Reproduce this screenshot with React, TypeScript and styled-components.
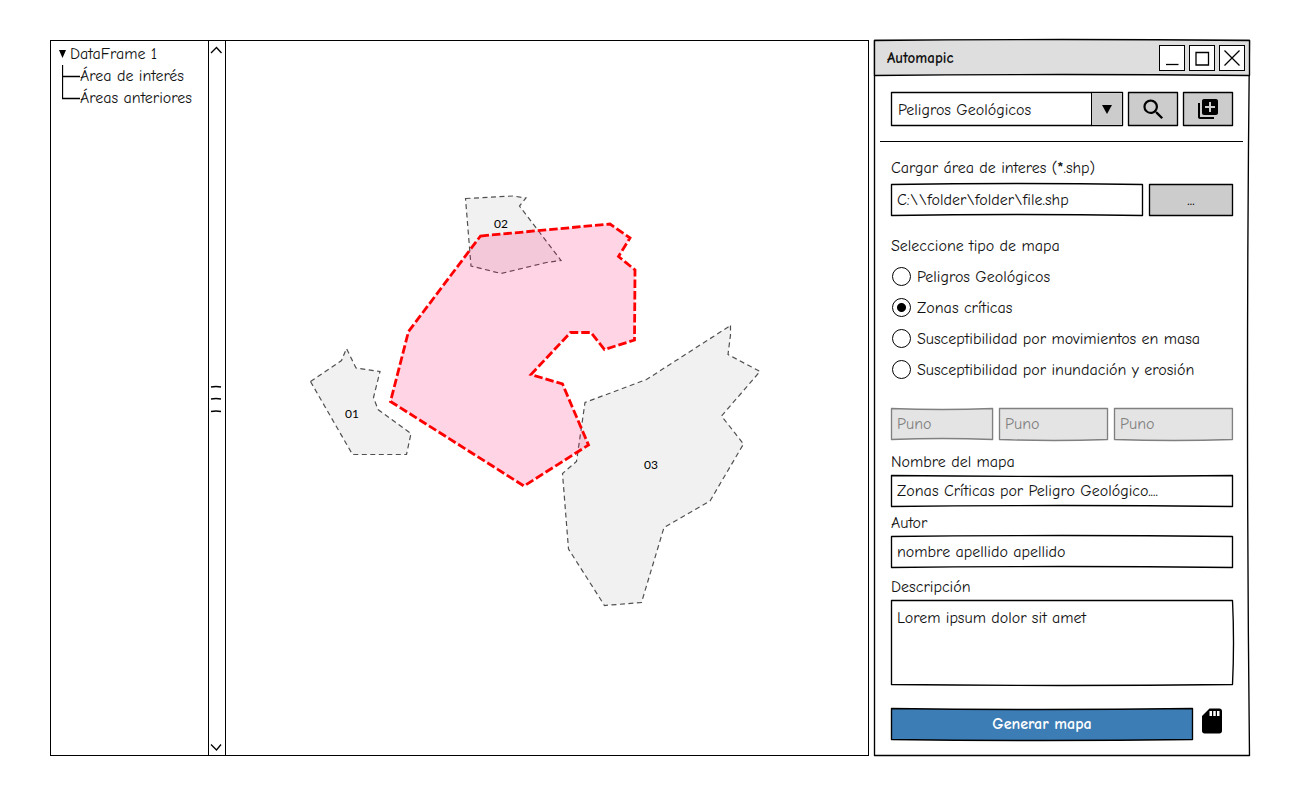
import React from "react";
import styled, { createGlobalStyle } from "styled-components";
import { MdLibraryAdd, MdSdCard, MdSearch } from "react-icons/md";

const GlobalStyle = createGlobalStyle`
  * { box-sizing: border-box; }
  body {
    margin: 0;
    background: #fff;
    color: #111;
    font: 16px/22px "Comic Neue", "Lato", sans-serif;
  }
  button, input, select, textarea { font: inherit; color: inherit; }
`;

/* ---------- hand-drawn outline ---------- */

const OutlineSvg = styled.svg`
  position: absolute;
  inset: 0;
  width: 100%;
  height: 100%;
  padding: 0;
  overflow: visible;
  pointer-events: none;
  z-index: -1;

  path { vector-effect: non-scaling-stroke; }
`;

type Bow = [number, number, number, number];

interface OutlineProps {
  w: number;
  h: number;
  fill?: string;
  stroke?: string;
  bow?: Bow;
}

/* A box whose sides bend by a pixel or so, given as top, right, bottom, left. */
function Outline({ w, h, fill = "#fff", stroke = "#000", bow = [0, 0, 0, 0] }: OutlineProps) {
  const [t, r, b, l] = bow.map((n) => n * 2);
  const x1 = w - 0.5;
  const y1 = h - 0.5;
  return (
    <OutlineSvg viewBox={`0 0 ${w} ${h}`} preserveAspectRatio="none" aria-hidden="true">
      <path
        d={`M.5 .5Q${w / 2} ${0.5 + t} ${x1} .5Q${x1 + r} ${h / 2} ${x1} ${y1}Q${w / 2} ${y1 + b} .5 ${y1}Q${0.5 + l} ${h / 2} .5 .5Z`}
        fill={fill}
        stroke={stroke}
        strokeWidth="1.35"
        strokeLinejoin="round"
      />
    </OutlineSvg>
  );
}

/* ---------- page ---------- */

const Page = styled.main`
  display: flex;
  gap: 5px;
  padding: 40px 60px 43px 50px;
`;

const MapWindow = styled.section`
  flex: 1;
  min-width: 0;
  display: flex;
  border: 1px solid #000;
`;

const Tree = styled.nav`
  width: 157px;
  padding: 2px 0 0 8px;
  flex: none;
`;

const TreeRoot = styled.div`
  display: flex;
  align-items: center;
  gap: 4px;
`;

const Branches = styled.ul`
  list-style: none;
  margin: 0;
  padding: 0 0 0 3px;
`;

const Branch = styled.li`
  display: flex;
  align-items: center;
  white-space: nowrap;
`;

const Scroller = styled.div`
  width: 18px;
  flex: none;
  display: flex;
  flex-direction: column;
  justify-content: space-between;
  align-items: center;
  padding: 5px 2px 4px 0;
  border: solid #000;
  border-width: 0 1px;
`;

const ScrollButton = styled.button`
  display: flex;
  padding: 0;
  border: 0;
  background: none;
`;

const MapCanvas = styled.svg`
  flex: 1;
  min-width: 0;
  display: block;
`;

/* ---------- dialog ---------- */

const Dialog = styled.section`
  position: relative;
  z-index: 0;
  width: 376px;
  flex: none;
`;

const TitleBar = styled.header`
  position: relative;
  z-index: 0;
  display: flex;
  align-items: center;
  gap: 4px;
  height: 36px;
  padding: 0 5px 1px 13px;
`;

const Title = styled.h1`
  flex: 1;
  margin: 0;
  font-size: 15px;
  line-height: 22px;
  font-weight: 900;
`;

const WindowButton = styled.button`
  display: flex;
  width: 26px;
  height: 26px;
  padding: 0;
  border: 1px solid #000;
  background: #fff;
`;

const Row = styled.div<{ $top?: number; $gap?: number }>`
  display: flex;
  gap: ${(p) => p.$gap ?? 6}px;
  margin-top: ${(p) => p.$top ?? 0}px;
`;

const Form = styled.form`
  padding: 16px 17px 15px;
`;

const Box = styled.div<{ $grow?: number; $width?: number; $height?: number; $muted?: boolean }>`
  position: relative;
  z-index: 0;
  display: flex;
  flex: ${(p) => (p.$width ? `0 0 ${p.$width}px` : `${p.$grow ?? 1} 1 0`)};
  min-width: 0;
  height: ${(p) => p.$height ?? 32}px;
  color: ${(p) => (p.$muted ? "#808080" : "inherit")};
`;

const TextInput = styled.input`
  width: 100%;
  padding: 0 6px;
  border: 0;
  background: none;
  outline-offset: -2px;
`;

const TextArea = styled.textarea`
  width: 100%;
  padding: 7px 6px;
  border: 0;
  background: none;
  resize: none;
`;

const Select = styled.select`
  width: 100%;
  padding: 2px 38px 0 7px;
  border: 0;
  background: none;
  appearance: none;
`;

const SelectArrow = styled.span`
  position: absolute;
  top: 1px;
  right: 1px;
  bottom: 1px;
  width: 31px;
  display: flex;
  align-items: center;
  justify-content: center;
  border-left: 1px solid #000;
  background: #ccc;
  pointer-events: none;
`;

const PlainButton = styled.button<{ $primary?: boolean }>`
  display: flex;
  align-items: center;
  justify-content: center;
  width: 100%;
  padding: 0;
  border: 0;
  background: none;
  color: ${(p) => (p.$primary ? "#fff" : "#000")};
  font-weight: ${(p) => (p.$primary ? 700 : 400)};
`;

const Rule = styled.hr`
  height: 1px;
  margin: 15px -10px 0 -11px;
  border: 0;
  background: #000;
`;

const Label = styled.label<{ $top: number; $bottom?: number }>`
  display: block;
  margin: ${(p) => p.$top}px 0 ${(p) => p.$bottom ?? 2}px;
`;

const RadioRow = styled.label`
  display: flex;
  align-items: center;
  gap: 6px;
  height: 31px;
  white-space: nowrap;
`;

const Radio = styled.input.attrs({ type: "radio" })`
  appearance: none;
  flex: none;
  width: 19px;
  height: 19px;
  margin: 0 0 0 1px;
  border: 1px solid #000;
  border-radius: 50%;

  &:checked {
    background: radial-gradient(circle, #000 4px, transparent 5px);
  }
`;

const CardButton = styled.button`
  display: flex;
  flex: none;
  width: 36px;
  height: 30px;
  margin: -2px 0 0 -2px;
  padding: 0;
  border: 0;
  background: none;
  color: #000;
`;

const areas = [
  {
    id: "01",
    x: 352,
    y: 418,
    points:
      "310.5,381.5 341.5,360.5 346.5,348.5 356,368 380,371.5 373.5,397.5 378,409.5 411,433.5 406.5,454.5 352.5,454.5",
  },
  {
    id: "02",
    x: 501,
    y: 228,
    points: "465.5,198.5 513,196 526,198 519.5,206 561,260.5 546.5,262.5 501,273.5 471,266",
  },
  {
    id: "03",
    x: 651,
    y: 469,
    points:
      "730.5,325.5 730.5,335 728,354.5 760,371.5 721.5,416 743.5,444 710,501 664,527.5 641.5,602.5 604.5,605.5 568.5,549 562.5,473.5 576.5,461.5 585,402.5 646.5,379.5",
  },
];

const interest =
  "480.5,236 610,224 630,238 618.5,256.5 635,270 634.5,340 604.5,349.5 591,332.5 570.5,332.5 531,374.5 562.5,384 588.5,445 524,486 390.5,401.5 408.5,331.5";

const mapTypes = [
  "Peligros Geológicos",
  "Zonas críticas",
  "Susceptibilidad por movimientos en masa",
  "Susceptibilidad por inundación y erosión",
];

const places: { grow: number; bow: Bow }[] = [
  { grow: 103, bow: [1, 0, -1, 0] },
  { grow: 110, bow: [0, 0, 1, 0] },
  { grow: 120, bow: [0, 0, 1, 0] },
];

export default function App() {
  return (
    <>
      <GlobalStyle />
      <Page>
        <MapWindow aria-label="Mapa">
          <Tree aria-label="Capas">
            <TreeRoot>
              <svg width="7" height="8" aria-hidden="true">
                <path d="M0 0H7L3.5 8Z" />
              </svg>
              DataFrame 1
            </TreeRoot>
            <Branches>
              {["Área de interés", "Áreas anteriores"].map((name, i) => (
                <Branch key={name}>
                  <svg width="18" height="22" fill="none" stroke="#000" strokeWidth="1.3" aria-hidden="true">
                    <path d={i === 0 ? "M.5 0V22M.5 11.5H18" : "M.5 0V11.5H18"} />
                  </svg>
                  {name}
                </Branch>
              ))}
            </Branches>
          </Tree>
          <Scroller>
            <ScrollButton type="button" aria-label="Subir">
              <svg width="12" height="8" fill="none" stroke="#000" strokeWidth="1.3">
                <path d="M1 7 6.5 1.5 11.5 7" />
              </svg>
            </ScrollButton>
            <svg width="12" height="28" stroke="#000" strokeWidth="1.3" fill="none" aria-hidden="true">
              <path d="M1 2Q6 1 11 2M1 14Q6 13 11 14M1 26.500Q6 25.500 11 26.500" />
            </svg>
            <ScrollButton type="button" aria-label="Bajar">
              <svg width="12" height="8" fill="none" stroke="#000" strokeWidth="1.3">
                <path d="M1 1.500 6.500 7 11 1.500" />
              </svg>
            </ScrollButton>
          </Scroller>
          <MapCanvas viewBox="226 41 642 714" role="img" aria-label="Área de interés y áreas anteriores">
            {areas.map((a) => (
              <g key={a.id}>
                <polygon
                  points={a.points}
                  fill="#f1f1f1"
                  stroke="#505050"
                  strokeWidth="1.2"
                  strokeDasharray="5 3.5"
                />
                <text x={a.x} y={a.y} fontFamily="Lato, sans-serif" fontSize="12" textAnchor="middle">
                  {a.id}
                </text>
              </g>
            ))}
            <polygon
              points={interest}
              fill="#ff0066"
              fillOpacity="0.17"
              stroke="#f00"
              strokeWidth="2.8"
              strokeDasharray="8.500 3"
            />
          </MapCanvas>
        </MapWindow>

        <Dialog aria-labelledby="dialog-title">
          <Outline w={376} h={717} bow={[0, -2, 0, 0]} />
          <TitleBar>
            <Outline w={376} h={36} fill="#dedede" bow={[-1, 0, -1, 0]} />
            <Title id="dialog-title">Automapic</Title>
            <WindowButton type="button" aria-label="Minimizar">
              <svg width="24" height="24" fill="none" stroke="#000" strokeWidth="1.3">
                <path d="M6 18.500H18.500" />
              </svg>
            </WindowButton>
            <WindowButton type="button" aria-label="Maximizar">
              <svg width="24" height="24" fill="none" stroke="#000" strokeWidth="1.3">
                <path d="M6 6.500H18.500V19H6Z" />
              </svg>
            </WindowButton>
            <WindowButton type="button" aria-label="Cerrar">
              <svg width="24" height="24" fill="none" stroke="#000" strokeWidth="1.3">
                <path d="M4.500 4.500 19.500 19.500M19.500 4.500 4.500 19.500" />
              </svg>
            </WindowButton>
          </TitleBar>

          <Form onSubmit={(e) => e.preventDefault()}>
            <Row $gap={5}>
              <Box $height={34}>
                <Outline w={232} h={34} />
                <Select aria-label="Módulo" defaultValue="Peligros Geológicos">
                  <option>Peligros Geológicos</option>
                </Select>
                <SelectArrow>
                  <svg width="10" height="9" aria-hidden="true">
                    <path d="M0 0H10L5 9Z" />
                  </svg>
                </SelectArrow>
              </Box>
              <Box $width={50} $height={34}>
                <Outline w={50} h={34} fill="#ccc" />
                <PlainButton type="button" aria-label="Buscar">
                  <MdSearch size={27} />
                </PlainButton>
              </Box>
              <Box $width={50} $height={34}>
                <Outline w={50} h={34} fill="#ccc" />
                <PlainButton type="button" aria-label="Agregar">
                  <MdLibraryAdd size={24} />
                </PlainButton>
              </Box>
            </Row>
            <Rule />

            <Label $top={15} $bottom={5} htmlFor="shape">
              Cargar área de interes (<b>*</b>.shp)
            </Label>
            <Row>
              <Box>
                <Outline w={251} h={32} bow={[-1, 0, -1, 0]} />
                <TextInput id="shape" defaultValue={"C:\\\\folder\\folder\\file.shp"} />
              </Box>
              <Box $width={84}>
                <Outline w={84} h={32} fill="#ccc" />
                <PlainButton type="button">...</PlainButton>
              </Box>
            </Row>

            <div role="radiogroup" aria-labelledby="map-type">
              <Label as="div" id="map-type" $top={19} $bottom={4}>
                Seleccione tipo de mapa
              </Label>
              {mapTypes.map((name, i) => (
                <RadioRow key={name}>
                  <Radio name="map-type" defaultChecked={i === 1} />
                  {name}
                </RadioRow>
              ))}
            </div>

            <Row $top={23}>
              {places.map((p, i) => (
                <Box key={i} $grow={p.grow} $muted>
                  <Outline w={p.grow} h={32} fill="#e4e4e4" stroke="#808080" bow={p.bow} />
                  <TextInput aria-label={`Lugar ${i + 1}`} defaultValue="Puno" disabled />
                </Box>
              ))}
            </Row>

            <Label $top={11} htmlFor="map-name">Nombre del mapa</Label>
            <Row>
              <Box>
                <Outline w={342} h={32} bow={[1, 0, -1, 0]} />
                <TextInput id="map-name" defaultValue="Zonas Críticas por Peligro Geológico...." />
              </Box>
            </Row>
            <Label $top={5} htmlFor="author">Autor</Label>
            <Row>
              <Box>
                <Outline w={342} h={32} bow={[-1, 0, -1, 0]} />
                <TextInput id="author" defaultValue="nombre apellido apellido" />
              </Box>
            </Row>
            <Label $top={8} htmlFor="description">Descripción</Label>
            <Row>
              <Box $height={85}>
                <Outline w={342} h={85} bow={[0, 1, 1, 0]} />
                <TextArea id="description" defaultValue="Lorem ipsum dolor sit amet" />
              </Box>
            </Row>

            <Row $top={23}>
              <Box>
                <Outline w={301} h={32} fill="#3d7db5" bow={[1, 0, 1, 0]} />
                <PlainButton type="submit" $primary>Generar mapa</PlainButton>
              </Box>
              <CardButton type="button" aria-label="Guardar">
                <MdSdCard size={30} />
              </CardButton>
            </Row>
          </Form>
        </Dialog>
      </Page>
    </>
  );
}
